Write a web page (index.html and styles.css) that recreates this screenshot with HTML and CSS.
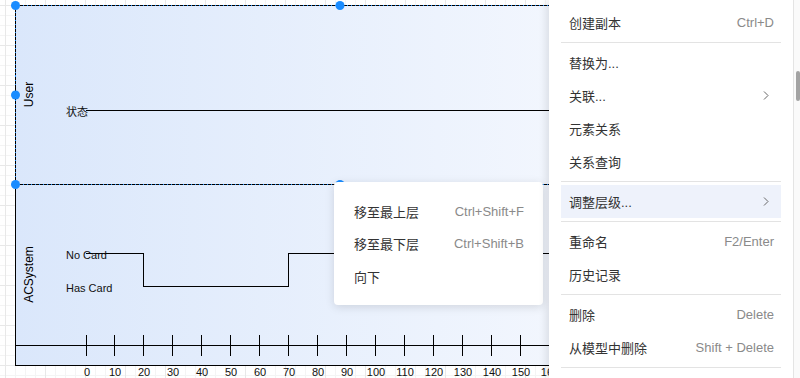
FILE: index.html
```html
<!DOCTYPE html>
<html lang="zh-CN">
<head>
    <meta charset="UTF-8">
    <meta name="viewport" content="width=device-width, initial-scale=1.0">
    <title>Timing Diagram</title>
    <link rel="stylesheet" href="styles.css">
</head>
<body>
    <div class="canvas">
        <svg class="diagram" width="800" height="378" viewBox="0 0 800 378">
            <defs>
                <linearGradient id="laneFill" x1="0" y1="0" x2="1" y2="0">
                    <stop offset="0" stop-color="#dae7fb"/>
                    <stop offset="1" stop-color="#f5f8fe"/>
                </linearGradient>
            </defs>

            <!-- frame -->
            <rect x="15.5" y="5.5" width="600" height="360" fill="url(#laneFill)" stroke="#000"/>
            <line x1="15" y1="184.5" x2="620" y2="184.5" stroke="#000"/>

            <!-- lane titles -->
            <text class="lane-title" transform="translate(33 94.5) rotate(-90)">User</text>
            <text class="lane-title" transform="translate(33 274.5) rotate(-90)">ACSystem</text>

            <!-- User lane -->
            <line x1="86" y1="110.5" x2="620" y2="110.5" stroke="#000"/>
            <text class="state" x="66" y="116">状态</text>

            <!-- ACSystem lane -->
            <polyline points="86,253.5 143.5,253.5 143.5,286.5 288.5,286.5 288.5,253.5 620,253.5" fill="none" stroke="#000"/>
            <text class="state" x="66" y="259">No Card</text>
            <text class="state" x="66" y="292">Has Card</text>

            <!-- time axis -->
            <line x1="15" y1="345.5" x2="620" y2="345.5" stroke="#000"/>
            <g stroke="#000">
                <line x1="86.5" y1="335" x2="86.5" y2="356"/>
                <line x1="114.5" y1="335" x2="114.5" y2="356"/>
                <line x1="143.5" y1="335" x2="143.5" y2="356"/>
                <line x1="172.5" y1="335" x2="172.5" y2="356"/>
                <line x1="201.5" y1="335" x2="201.5" y2="356"/>
                <line x1="230.5" y1="335" x2="230.5" y2="356"/>
                <line x1="259.5" y1="335" x2="259.5" y2="356"/>
                <line x1="288.5" y1="335" x2="288.5" y2="356"/>
                <line x1="317.5" y1="335" x2="317.5" y2="356"/>
                <line x1="346.5" y1="335" x2="346.5" y2="356"/>
                <line x1="375.5" y1="335" x2="375.5" y2="356"/>
                <line x1="404.5" y1="335" x2="404.5" y2="356"/>
                <line x1="433.5" y1="335" x2="433.5" y2="356"/>
                <line x1="462.5" y1="335" x2="462.5" y2="356"/>
                <line x1="491.5" y1="335" x2="491.5" y2="356"/>
                <line x1="520.5" y1="335" x2="520.5" y2="356"/>
                <line x1="549.5" y1="335" x2="549.5" y2="356"/>
            </g>
            <g class="tick-label">
                <text x="87" y="376">0</text>
                <text x="115" y="376">10</text>
                <text x="144" y="376">20</text>
                <text x="173" y="376">30</text>
                <text x="202" y="376">40</text>
                <text x="231" y="376">50</text>
                <text x="260" y="376">60</text>
                <text x="289" y="376">70</text>
                <text x="318" y="376">80</text>
                <text x="347" y="376">90</text>
                <text x="376" y="376">100</text>
                <text x="405" y="376">110</text>
                <text x="434" y="376">120</text>
                <text x="463" y="376">130</text>
                <text x="492" y="376">140</text>
                <text x="521" y="376">150</text>
                <text x="550" y="376">160</text>
            </g>

            <!-- selection of the User lane -->
            <rect x="15.5" y="5.5" width="650" height="179" fill="none" stroke="#1a8cff"/>
            <rect x="15.5" y="5.5" width="650" height="179" fill="none" stroke="#000" stroke-dasharray="3 1"/>
            <g fill="#1a8cff">
                <circle cx="15.5" cy="5.5" r="4.5"/>
                <circle cx="340" cy="5.5" r="4.5"/>
                <circle cx="15.5" cy="95" r="4.5"/>
                <circle cx="15.5" cy="184.5" r="4.5"/>
                <circle cx="340" cy="184.5" r="4.5"/>
            </g>
        </svg>

        <div class="submenu">
            <div class="menu-item"><span>移至最上层</span><span class="shortcut">Ctrl+Shift+F</span></div>
            <div class="menu-item"><span>移至最下层</span><span class="shortcut">Ctrl+Shift+B</span></div>
            <div class="menu-item"><span>向下</span></div>
        </div>

        <div class="menu">
            <div class="menu-item"><span>创建副本</span><span class="shortcut">Ctrl+D</span></div>
            <div class="separator"></div>
            <div class="menu-item"><span>替换为...</span></div>
            <div class="menu-item"><span>关联...</span><svg class="chevron" width="6" height="9" viewBox="0 0 6 9"><path d="M1 0.5 L5 4.5 L1 8.5" fill="none" stroke="#666" stroke-width="1"/></svg></div>
            <div class="menu-item"><span>元素关系</span></div>
            <div class="menu-item"><span>关系查询</span></div>
            <div class="separator"></div>
            <div class="menu-item active"><span>调整层级...</span><svg class="chevron" width="6" height="9" viewBox="0 0 6 9"><path d="M1 0.5 L5 4.5 L1 8.5" fill="none" stroke="#666" stroke-width="1"/></svg></div>
            <div class="separator"></div>
            <div class="menu-item"><span>重命名</span><span class="shortcut">F2/Enter</span></div>
            <div class="menu-item"><span>历史记录</span></div>
            <div class="separator"></div>
            <div class="menu-item"><span>删除</span><span class="shortcut">Delete</span></div>
            <div class="menu-item"><span>从模型中删除</span><span class="shortcut">Shift + Delete</span></div>
            <div class="separator"></div>
        </div>

        <div class="scrollbar"><div class="thumb"></div></div>
    </div>
</body>
</html>
```

FILE: styles.css
```css
body {
    margin: 0;
    overflow: hidden;
    font-family: "Liberation Sans", Arial, "Noto Sans CJK SC", sans-serif;
}
.canvas {
    position: relative;
    width: 800px;
    height: 378px;
    overflow: hidden;
    background-color: #fff;
    background-image:
        linear-gradient(#e8e8e8 1px, transparent 1px),
        linear-gradient(90deg, #e8e8e8 1px, transparent 1px),
        linear-gradient(#f4f4f4 1px, transparent 1px),
        linear-gradient(90deg, #f4f4f4 1px, transparent 1px);
    background-size: 40px 40px, 40px 40px, 10px 10px, 10px 10px;
    background-position: 5px 5px;
}
.diagram {
    display: block;
}
.diagram line, .diagram polyline, .diagram rect {
    shape-rendering: crispEdges;
}
.lane-title {
    font-size: 12px;
    text-anchor: middle;
    fill: #000;
}
.state {
    font-size: 11px;
    fill: #111;
}
.tick-label text {
    font-size: 11px;
    text-anchor: middle;
    fill: #111;
}

/* context menus */
.menu {
    position: absolute;
    left: 549px;
    top: 0;
    width: 244px;
    height: 378px;
    box-sizing: border-box;
    padding: 6px 12px 0;
    background: #fff;
    box-shadow: -3px 0 8px rgba(0, 0, 0, 0.1);
}
.submenu {
    position: absolute;
    left: 334px;
    top: 182px;
    width: 209px;
    height: 123px;
    box-sizing: border-box;
    padding: 13px 19px 0 20px;
    background: #fff;
    border-radius: 4px;
    box-shadow: 0 2px 10px rgba(0, 0, 0, 0.13);
}
.menu-item {
    display: flex;
    justify-content: space-between;
    align-items: center;
    height: 33.2px;
    padding: 0 7px 0 8px;
    font-size: 13px;
    color: #333;
}
.submenu .menu-item {
    height: 32.5px;
    padding: 0;
}
.menu-item.active {
    background: #eef2fb;
}
.shortcut {
    color: #8a8a8a;
}
.chevron {
    margin-right: 5px;
}
.separator {
    height: 1px;
    margin: 3px 0 2.5px;
    background: #e3e3e3;
}
.scrollbar {
    position: absolute;
    right: 0;
    top: 0;
    width: 7px;
    height: 378px;
    box-sizing: border-box;
    background: #fafafa;
    border-left: 1px solid #e4e4e4;
}
.thumb {
    margin: 71px 0 0 2px;
    width: 4px;
    height: 30px;
    border-radius: 2px;
    background: #a3a3a3;
}
```
